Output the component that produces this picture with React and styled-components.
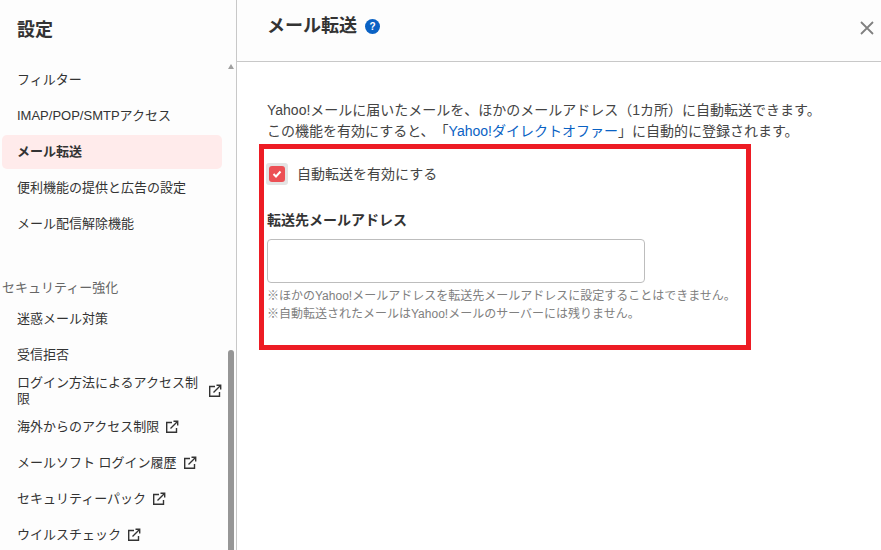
import React from 'react';
import styled, {createGlobalStyle} from 'styled-components';

const GlobalStyle = createGlobalStyle`
    html, body {
        margin: 0;
        height: 100%;
        background: #fff;
    }
    body {
        font-family: "Liberation Sans", "Noto Sans CJK JP", sans-serif;
        color: #333;
        overflow: hidden;
        text-spacing-trim: space-all;
    }
`;

const Page = styled.div`
    position: relative;
    display: flex;
    width: 881px;
    height: 550px;
    overflow: hidden;
`;

const Sidebar = styled.aside`
    position: relative;
    flex: 0 0 236px;
    height: 550px;
    background: #fdfdfd;
    border-right: 1px solid #c8c8c8;
    overflow: hidden;
`;

const SidebarTitle = styled.h1`
    margin: 0;
    height: 62px;
    padding: 18px 0 0 17px;
    box-sizing: border-box;
    font-size: 18px;
    line-height: 24px;
    font-weight: 700;
`;

const Menu = styled.ul`
    list-style: none;
    margin: 0;
    padding: 0;
    width: 222px;
`;

const MenuItem = styled.li`
    display: flex;
    align-items: center;
    height: ${p => (p.$active ? '34px' : '36px')};
    margin: ${p => (p.$active ? '1px 0 1px 2px' : '0')};
    padding-left: ${p => (p.$active ? '15px' : '17px')};
    border-radius: 5px;
    background: ${p => (p.$active ? '#ffebeb' : 'transparent')};
    font-size: 13px;
    line-height: 16px;
    font-weight: ${p => (p.$active ? 700 : 400)};
`;

const MenuLabel = styled.span`
    flex: ${p => (p.$wrap ? '0 0 183px' : '0 1 auto')};
`;

const SectionLabel = styled.div`
    margin-top: 37px;
    padding-left: 2px;
    height: 22px;
    font-size: 13px;
    line-height: 18px;
    color: #666;
`;

const External = styled.svg`
    flex: none;
    width: 14px;
    height: 14px;
    margin-left: ${p => (p.$wide ? '8px' : '6px')};
    fill: none;
    stroke: #333;
    stroke-width: 1.4;
`;

const ScrollArrow = styled.div`
    position: absolute;
    top: 64px;
    left: 228px;
    border-left: 3.5px solid transparent;
    border-right: 3.5px solid transparent;
    border-bottom: 5px solid #a0a0a0;
`;

const ScrollThumb = styled.div`
    position: absolute;
    top: 350px;
    left: 228px;
    width: 6px;
    height: 200px;
    border-radius: 3px 3px 0 0;
    background: #969696;
`;

const Main = styled.main`
    flex: 1;
    min-width: 0;
`;

const MainHeader = styled.header`
    display: flex;
    align-items: flex-start;
    height: 62px;
    box-sizing: border-box;
    padding: 13px 7px 0 30px;
    background: #fdfdfd;
    border-bottom: 1px solid #c8c8c8;
`;

const MainTitle = styled.h2`
    margin: 0;
    font-size: 18px;
    line-height: 26px;
    font-weight: 700;
`;

const HelpIcon = styled.span`
    display: flex;
    align-items: center;
    justify-content: center;
    width: 15px;
    height: 15px;
    margin: 6px 0 0 8px;
    border-radius: 50%;
    background: #0a62c4;
    color: #fff;
    font-size: 10px;
    line-height: 1;
    font-weight: 700;
`;

const CloseIcon = styled.svg`
    width: 14px;
    height: 14px;
    margin: 8px 0 0 auto;
    fill: none;
    stroke: #808080;
    stroke-width: 1.8;
`;

const Content = styled.div`
    padding: 38px 0 0 30px;
`;

const Intro = styled.p`
    margin: 0;
    font-size: 14px;
    line-height: 21px;
    color: #444;
`;

const TextLink = styled.a`
    color: #0a62c4;
`;

const CheckRow = styled.label`
    display: flex;
    align-items: center;
    gap: 9px;
    margin: 21px 0 0 -1px;
    font-size: 14px;
    line-height: 22px;
    color: #444;
`;

const CheckHalo = styled.span`
    display: flex;
    align-items: center;
    justify-content: center;
    width: 22px;
    height: 22px;
    border-radius: 3px;
    background: #e4e4e4;
`;

const CheckBox = styled.span`
    display: flex;
    align-items: center;
    justify-content: center;
    width: 16px;
    height: 16px;
    border-radius: 3px;
    background: #ec5055;
`;

const FieldLabel = styled.div`
    margin-top: 25px;
    font-size: 14px;
    line-height: 20px;
    font-weight: 700;
    color: #333;
`;

const TextInput = styled.input`
    display: block;
    width: 378px;
    height: 44px;
    box-sizing: border-box;
    margin-top: 9px;
    border: 1px solid #bdbdbd;
    border-radius: 4px;
    background: #fff;
    outline: none;
`;

const Notes = styled.div`
    margin-top: 4px;
    font-size: 12px;
    line-height: 18px;
    color: #808080;
`;

const Annotation = styled.div`
    position: absolute;
    left: 259px;
    top: 144px;
    width: 492px;
    height: 206px;
    box-sizing: border-box;
    border: 5px solid #ed1c24;
    pointer-events: none;
`;

const ExternalIcon = ({wide}) => (
    <External $wide={wide} viewBox="0 0 14 14">
        <path d="M7 2.500H1.700v9.800h9.800V8" />
        <path d="M5.500 8.500L12.500 1.500M8.500 1.300h4.200v4.200" />
    </External>
);

const topItems = ['フィルター', 'IMAP/POP/SMTPアクセス', 'メール転送', '便利機能の提供と広告の設定', 'メール配信解除機能'];
const securityItems = [
    {label: '迷惑メール対策'},
    {label: '受信拒否'},
    {label: 'ログイン方法によるアクセス制限', external: true, wrap: true},
    {label: '海外からのアクセス制限', external: true},
    {label: 'メールソフト ログイン履歴', external: true},
    {label: 'セキュリティーパック', external: true},
    {label: 'ウイルスチェック', external: true},
];

const App = () => (
    <Page>
        <GlobalStyle />
        <Sidebar>
            <SidebarTitle>設定</SidebarTitle>
            <Menu>
                {topItems.map(item => (
                    <MenuItem key={item} $active={item === 'メール転送'}>{item}</MenuItem>
                ))}
            </Menu>
            <SectionLabel>セキュリティー強化</SectionLabel>
            <Menu>
                {securityItems.map(item => (
                    <MenuItem key={item.label}>
                        <MenuLabel $wrap={item.wrap}>{item.label}</MenuLabel>
                        {item.external && <ExternalIcon wide={item.wrap} />}
                    </MenuItem>
                ))}
            </Menu>
            <ScrollArrow />
            <ScrollThumb />
        </Sidebar>
        <Main>
            <MainHeader>
                <MainTitle>メール転送</MainTitle>
                <HelpIcon>?</HelpIcon>
                <CloseIcon viewBox="0 0 14 14">
                    <path d="M1 1l12 12M13 1L1 13" />
                </CloseIcon>
            </MainHeader>
            <Content>
                <Intro>
                    Yahoo!メールに届いたメールを、ほかのメールアドレス（1カ所）に自動転送できます。<br />
                    この機能を有効にすると、「<TextLink>Yahoo!ダイレクトオファー</TextLink>」に自動的に登録されます。
                </Intro>
                <CheckRow>
                    <CheckHalo>
                        <CheckBox>
                            <svg width="10" height="10" viewBox="0 0 10 10" fill="none" stroke="#fff" strokeWidth="2">
                                <path d="M1.500 5l2.500 2.500L8.500 2.500" />
                            </svg>
                        </CheckBox>
                    </CheckHalo>
                    自動転送を有効にする
                </CheckRow>
                <FieldLabel>転送先メールアドレス</FieldLabel>
                <TextInput type="text" />
                <Notes>
                    ※ほかのYahoo!メールアドレスを転送先メールアドレスに設定することはできません。<br />
                    ※自動転送されたメールはYahoo!メールのサーバーには残りません。
                </Notes>
            </Content>
        </Main>
        <Annotation />
    </Page>
);

export default App;
